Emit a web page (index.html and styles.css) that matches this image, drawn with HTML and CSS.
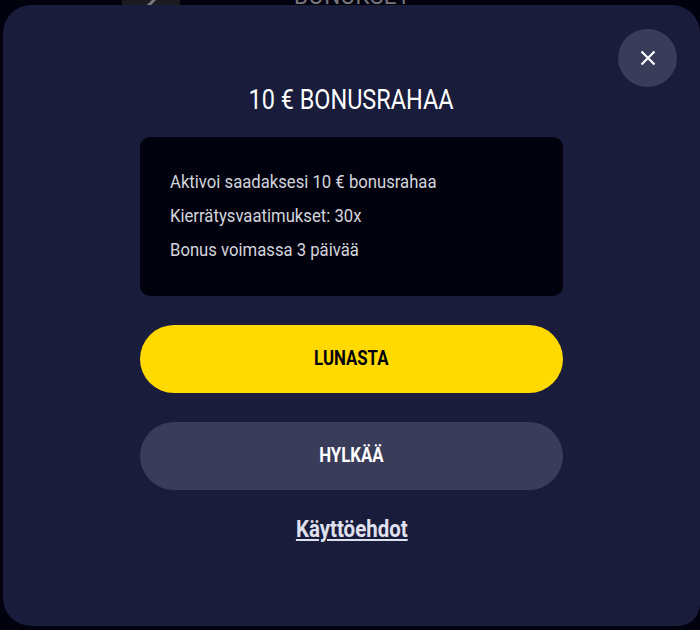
FILE: index.html
```html
<!DOCTYPE html>
<html lang="fi">
<head>
<meta charset="utf-8">
<title>10 € BONUSRAHAA</title>
<link rel="stylesheet" href="styles.css">
</head>
<body>
<header class="backdrop">
  <div class="back-btn"><svg width="24" height="24" viewBox="0 0 24 24" class="back-icon"><path d="M16 2 L6 12 L16 22" fill="none" stroke="#77777c" stroke-width="3"/></svg></div>
  <div class="back-title">BONUKSET</div>
</header>
<main class="modal">
  <div class="close-row">
    <button class="close" aria-label="Sulje">
      <svg width="16" height="16" viewBox="0 0 16 16"><path d="M1.5 1.5 L14.5 14.5 M14.5 1.5 L1.5 14.5" stroke="#fff" stroke-width="2.2" fill="none"/></svg>
    </button>
  </div>
  <h1 class="title">10 € BONUSRAHAA</h1>
  <section class="info">
    <p>Aktivoi saadaksesi 10 € bonusrahaa</p>
    <p>Kierrätysvaatimukset: 30x</p>
    <p>Bonus voimassa 3 päivää</p>
  </section>
  <button class="btn btn-primary"><span class="btn-label">LUNASTA</span></button>
  <button class="btn btn-secondary"><span class="btn-label">HYLKÄÄ</span></button>
  <a class="terms" href="#">Käyttöehdot</a>
</main>
</body>
</html>
```
FILE: styles.css
```css
* { box-sizing: border-box; }
html, body { margin: 0; height: 630px; overflow: hidden; }
body {
  background: #02020f;
  font-family: "Roboto", "Liberation Sans", sans-serif;
  color: #fff;
}
.backdrop {
  height: 5px;
  overflow: hidden;
  display: flex;
  align-items: flex-end;
  padding-left: 122px;
}
.back-btn {
  width: 58px;
  height: 40px;
  background: #1c1c20;
  display: flex;
  align-items: flex-end;
  justify-content: center;
  flex: none;
}
.back-icon { margin: 0 0 -15px 2px; }
.back-title {
  margin-left: 114px;
  font-size: 24px;
  line-height: 24px;
  margin-bottom: -3px;
  color: #77777c;
  letter-spacing: 0.5px;
  flex: none;
  transform: scaleX(0.93);
  transform-origin: left center;
}
.modal {
  margin-left: 3px;
  height: 621px;
  background: #191c3b;
  border-radius: 28px 28px 22px 28px;
  display: flex;
  flex-direction: column;
  align-items: center;
  padding: 24px 0 0 0;
}
.close-row {
  align-self: stretch;
  display: flex;
  justify-content: flex-end;
  padding-right: 23px;
  height: 58px;
}
.close {
  width: 59px;
  height: 58px;
  border: 0;
  padding: 0;
  border-radius: 50%;
  background: #3a3d59;
  display: flex;
  align-items: center;
  justify-content: center;
}
.title {
  margin: -4px 0 0;
  font-size: 27px;
  line-height: 34px;
  font-weight: 400;
  transform: scaleX(0.868);
}
.info {
  margin-top: 20px;
  width: 423px;
  height: 159px;
  background: #02020f;
  border-radius: 10px;
  padding: 28px 30px;
  color: #d4d5dc;
  font-size: 19px;
  line-height: 34px;
}
.info p {
  margin: 0;
  transform: scaleX(0.878);
  transform-origin: left center;
  white-space: nowrap;
}
.btn {
  display: block;
  width: 423px;
  height: 68px;
  border: 0;
  border-radius: 34px;
  padding: 0 0 2px;
  font-family: inherit;
  font-size: 20px;
  font-weight: 700;
  flex: none;
}
.btn-label {
  display: inline-block;
  transform: scaleX(0.84);
}
.btn-primary { margin-top: 29px; background: #ffd900; color: #02020f; }
.btn-secondary { margin-top: 29px; background: #3a3d59; color: #fff; }
.terms {
  margin-top: 26px;
  color: #e0e1ee;
  font-size: 23px;
  line-height: 28px;
  font-weight: 700;
  text-decoration: underline;
  transform: scaleX(0.89);
}
```
